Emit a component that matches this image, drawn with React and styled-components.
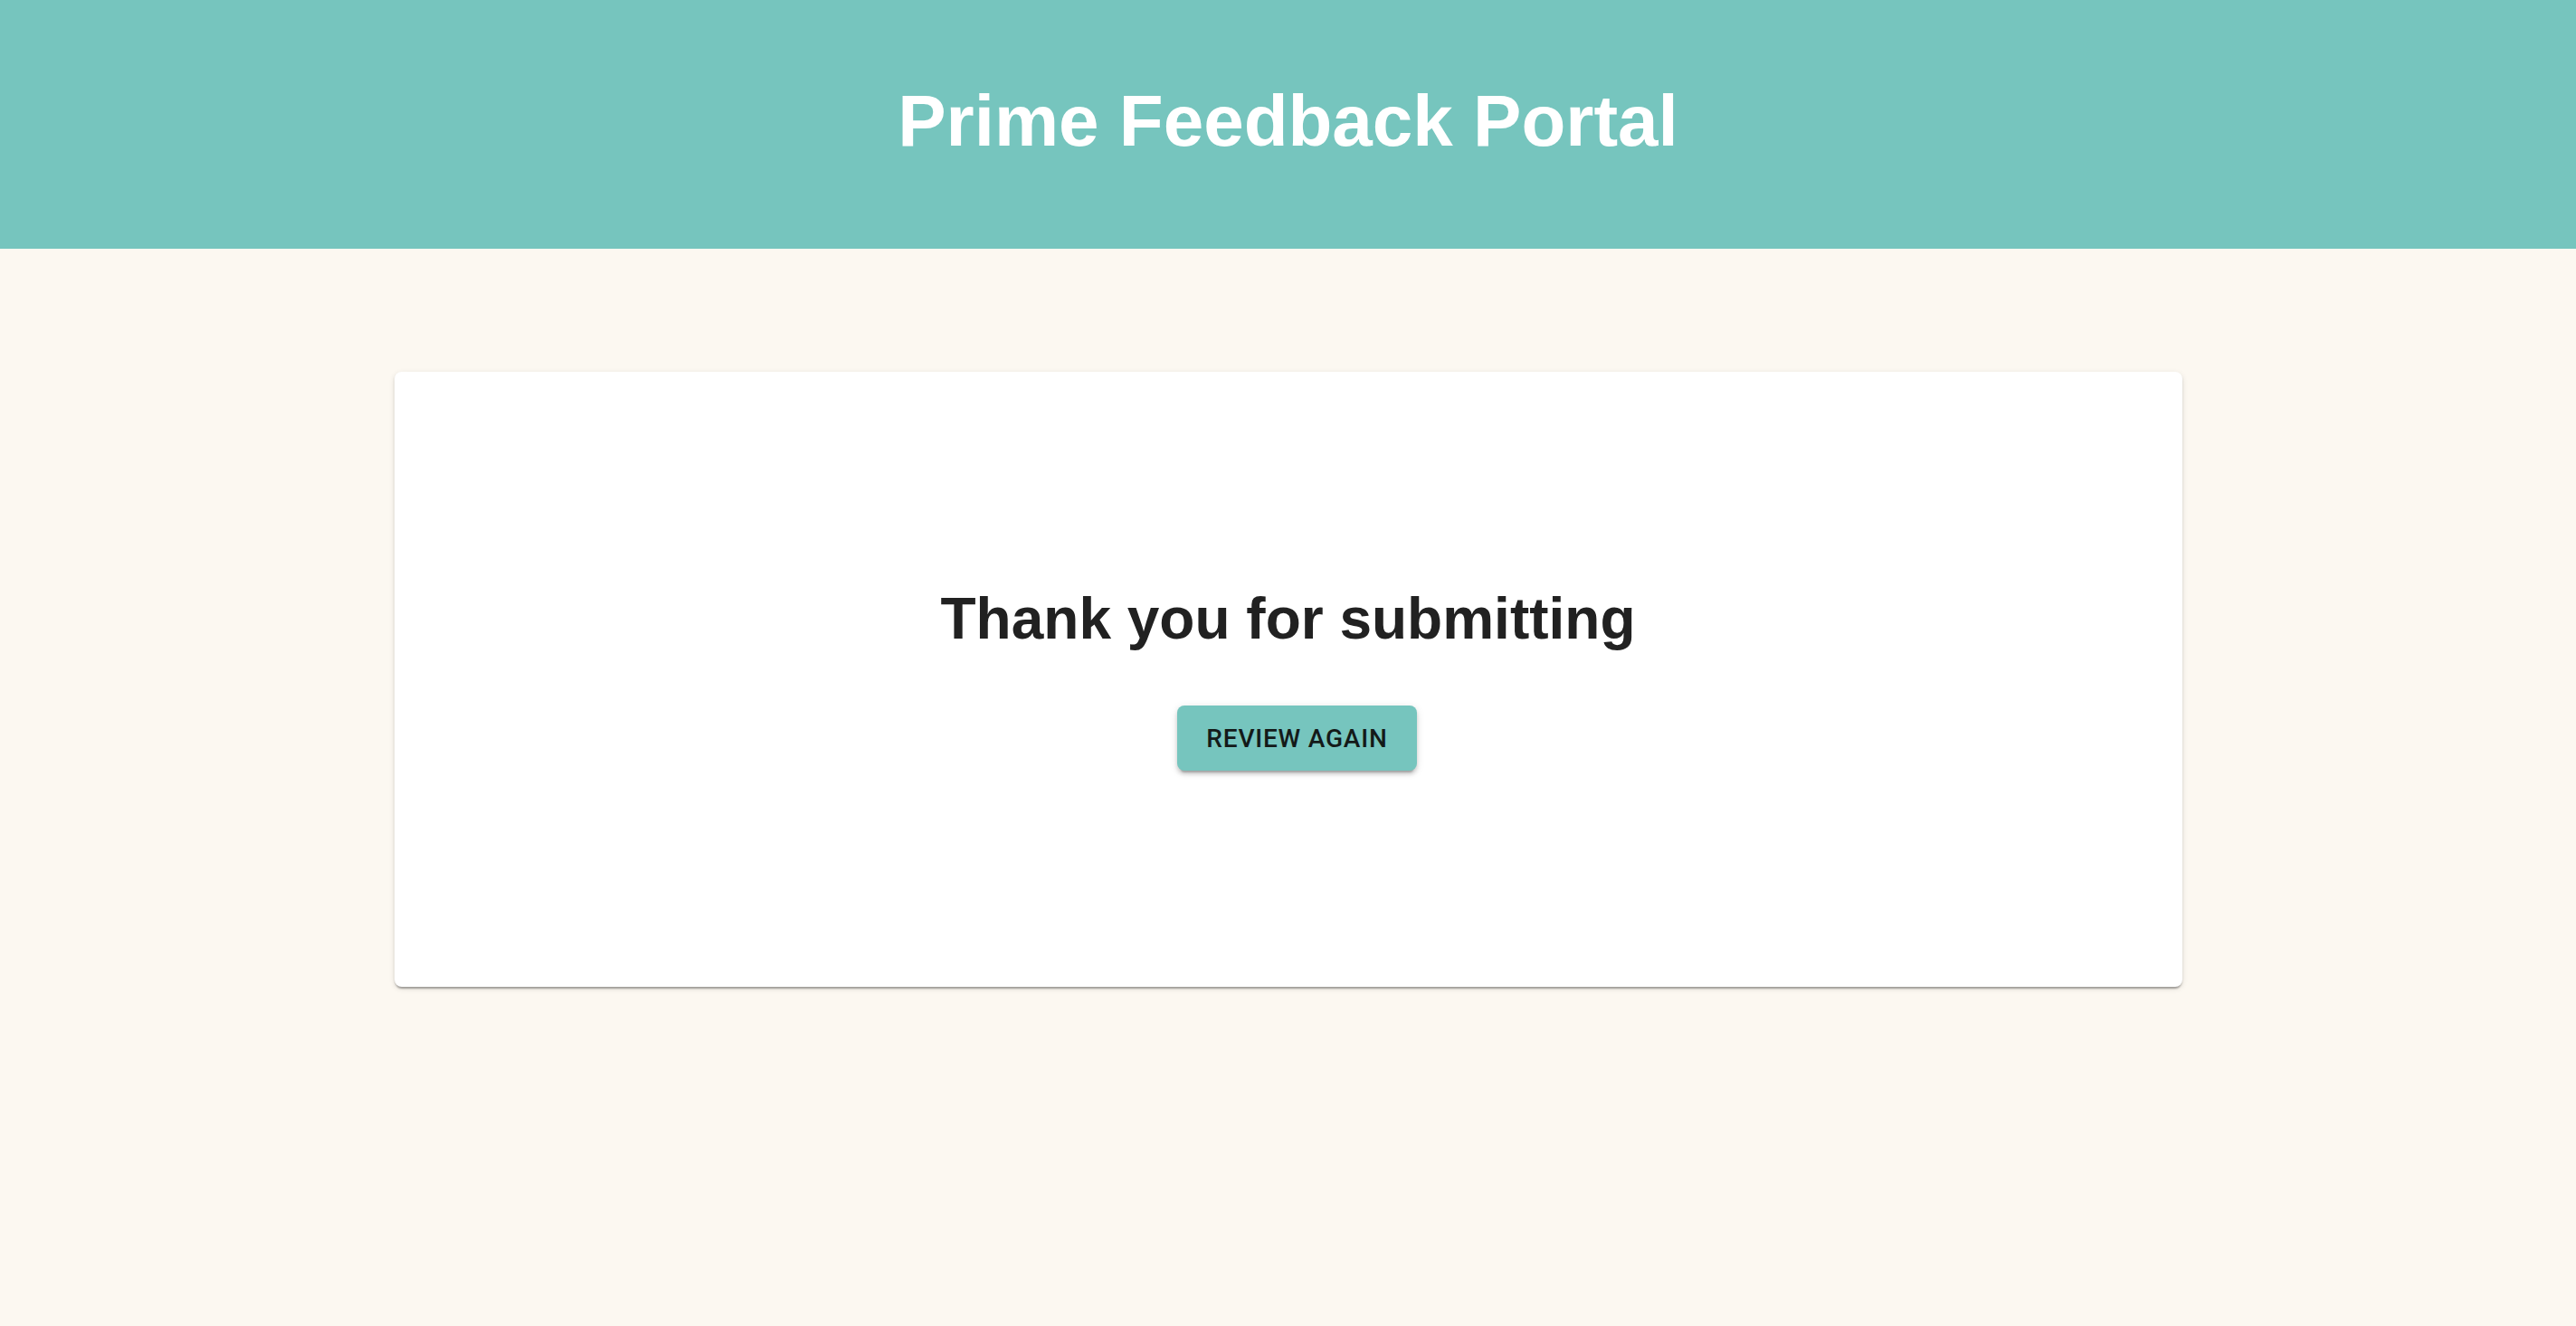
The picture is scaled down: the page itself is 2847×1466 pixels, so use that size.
import React from 'react';
import styled, { createGlobalStyle } from 'styled-components';

const GlobalStyle = createGlobalStyle`
  html, body {
    margin: 0;
    padding: 0;
  }

  body {
    background-color: #fcf8f1;
    font-family: 'Liberation Sans', Arial, sans-serif;
  }
`;

const App = () => {
  return (
    <Page>
      <GlobalStyle />
      <Header>
        <Title>Prime Feedback Portal</Title>
      </Header>
      <Main>
        <Card>
          <Heading>Thank you for submitting</Heading>
          <ReviewButton type="button">Review Again</ReviewButton>
        </Card>
      </Main>
    </Page>
  );
};

export default App;

const Page = styled.div`
  min-height: 100vh;
  display: flex;
  flex-direction: column;
  background-color: #fcf8f1;
`;

const Header = styled.header`
  height: 275px;
  box-sizing: border-box;
  padding-bottom: 8px;
  display: flex;
  justify-content: center;
  align-items: center;
  background-color: #76c5be;
`;

const Title = styled.h1`
  margin: 0;
  font-family: 'Liberation Sans', Arial, sans-serif;
  font-size: 80px;
  line-height: 1.2;
  font-weight: 700;
  color: #ffffff;
`;

const Main = styled.main`
  display: flex;
  justify-content: center;
  padding-top: 136px;
`;

const Card = styled.section`
  width: 1976px;
  height: 680px;
  box-sizing: border-box;
  padding-bottom: 4px;
  display: flex;
  flex-direction: column;
  align-items: center;
  justify-content: center;
  gap: 58px;
  background-color: #ffffff;
  border-radius: 8px;
  box-shadow: 0 4px 2px -2px rgba(0, 0, 0, 0.2), 0 2px 2px 0 rgba(0, 0, 0, 0.14),
    0 2px 6px 0 rgba(0, 0, 0, 0.12);
`;

const Heading = styled.h2`
  margin: 0;
  font-family: 'Liberation Sans', Arial, sans-serif;
  font-size: 64px;
  line-height: 1.2;
  font-weight: 700;
  color: #212121;
`;

const ReviewButton = styled.button`
  height: 72px;
  margin-left: 20px;
  padding: 0 32px;
  border: none;
  border-radius: 8px;
  background-color: #76c5be;
  color: #141a19;
  font-family: Roboto, 'Liberation Sans', sans-serif;
  font-size: 28px;
  font-weight: 500;
  letter-spacing: 0.8px;
  text-transform: uppercase;
  cursor: pointer;
  box-shadow: 0 6px 2px -4px rgba(0, 0, 0, 0.2), 0 4px 4px 0 rgba(0, 0, 0, 0.14),
    0 2px 10px 0 rgba(0, 0, 0, 0.12);

  &:hover {
    background-color: #5fb3ab;
  }
`;
